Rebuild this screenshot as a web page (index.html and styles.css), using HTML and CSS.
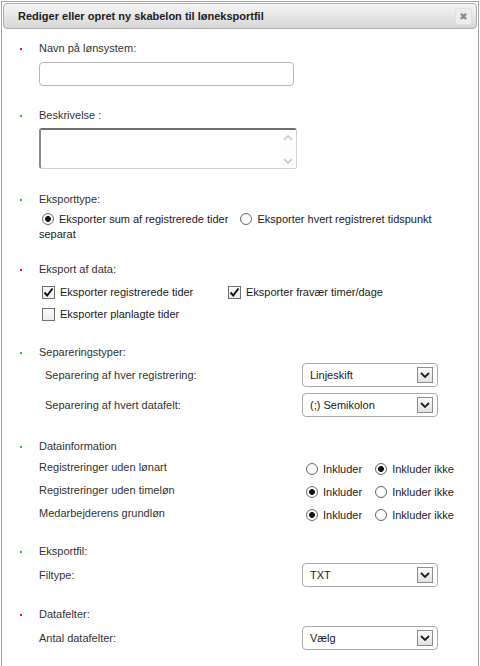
FILE: index.html
```html
<!DOCTYPE html>
<html lang="da">
<head>
<meta charset="utf-8">
<title>Rediger eller opret ny skabelon til løneksportfil</title>
<link rel="stylesheet" href="styles.css">
</head>
<body>
<div class="dialog">
  <div class="titlebar">
    <span class="title">Rediger eller opret ny skabelon til løneksportfil</span>
    <span class="close">&#10006;</span>
  </div>
  <div class="content">
    <div class="sec s1">
      <div class="sec-title req">Navn på lønsystem:</div>
      <div class="textbox"></div>
    </div>

    <div class="sec s2">
      <div class="sec-title opt">Beskrivelse :</div>
      <div class="textarea">
        <div class="scroll">
          <svg width="10" height="6" viewBox="0 0 10 6"><path d="M1 5 L5 1 L9 5" fill="none" stroke="#c4c4c4" stroke-width="1.5"/></svg>
          <svg width="10" height="6" viewBox="0 0 10 6"><path d="M1 1 L5 5 L9 1" fill="none" stroke="#c4c4c4" stroke-width="1.5"/></svg>
        </div>
      </div>
    </div>

    <div class="sec s3">
      <div class="sec-title opt">Eksporttype:</div>
      <div class="radio-para"><span class="rb on"></span><span>Eksporter sum af registrerede tider</span> <span class="rb rb-second"></span><span>Eksporter hvert registreret tidspunkt</span><br><span>separat</span></div>
    </div>

    <div class="sec s4">
      <div class="sec-title req">Eksport af data:</div>
      <div class="check-grid">
        <div class="check"><span class="cb"><svg width="11" height="11" viewBox="0 0 11 11"><path d="M1.5 5.5 L4.2 8.5 L9.5 1.5" fill="none" stroke="#111" stroke-width="2"/></svg></span>Eksporter registrerede tider</div>
        <div class="check"><span class="cb"><svg width="11" height="11" viewBox="0 0 11 11"><path d="M1.5 5.5 L4.2 8.5 L9.5 1.5" fill="none" stroke="#111" stroke-width="2"/></svg></span>Eksporter fravær timer/dage</div>
        <div class="check"><span class="cb"></span>Eksporter planlagte tider</div>
      </div>
    </div>

    <div class="sec s5">
      <div class="sec-title opt">Separeringstyper:</div>
      <div class="field-row sub first">
        <span class="flabel">Separering af hver registrering:</span>
        <div class="select"><span>Linjeskift</span><span class="arrow"><svg width="10" height="6" viewBox="0 0 10 6"><path d="M1 1 L5 5 L9 1" fill="none" stroke="#222" stroke-width="1.8"/></svg></span></div>
      </div>
      <div class="field-row sub">
        <span class="flabel">Separering af hvert datafelt:</span>
        <div class="select"><span>(;) Semikolon</span><span class="arrow"><svg width="10" height="6" viewBox="0 0 10 6"><path d="M1 1 L5 5 L9 1" fill="none" stroke="#222" stroke-width="1.8"/></svg></span></div>
      </div>
    </div>

    <div class="sec s6">
      <div class="sec-title opt">Datainformation</div>
      <div class="info-rows">
        <div class="info-row">
          <span class="ilabel">Registreringer uden lønart</span>
          <span class="iopts"><span class="rb"></span>Inkluder<span class="rb rb-ikke on"></span>Inkluder ikke</span>
        </div>
        <div class="info-row">
          <span class="ilabel">Registreringer uden timeløn</span>
          <span class="iopts"><span class="rb on"></span>Inkluder<span class="rb rb-ikke"></span>Inkluder ikke</span>
        </div>
        <div class="info-row">
          <span class="ilabel">Medarbejderens grundløn</span>
          <span class="iopts"><span class="rb on"></span>Inkluder<span class="rb rb-ikke"></span>Inkluder ikke</span>
        </div>
      </div>
    </div>

    <div class="sec s7">
      <div class="sec-title opt">Eksportfil:</div>
      <div class="field-row first">
        <span class="flabel">Filtype:</span>
        <div class="select"><span>TXT</span><span class="arrow"><svg width="10" height="6" viewBox="0 0 10 6"><path d="M1 1 L5 5 L9 1" fill="none" stroke="#222" stroke-width="1.8"/></svg></span></div>
      </div>
    </div>

    <div class="sec s8">
      <div class="sec-title req">Datafelter:</div>
      <div class="field-row first">
        <span class="flabel">Antal datafelter:</span>
        <div class="select"><span>Vælg</span><span class="arrow"><svg width="10" height="6" viewBox="0 0 10 6"><path d="M1 1 L5 5 L9 1" fill="none" stroke="#222" stroke-width="1.8"/></svg></span></div>
      </div>
    </div>
  </div>
</div>
</body>
</html>
```

FILE: styles.css
```css
html, body {
  margin: 0;
  padding: 0;
  background: #fff;
}

body {
  font-family: "Liberation Sans", Arial, sans-serif;
  font-size: 11px;
  color: #333;
  overflow: hidden;
}

.dialog {
  margin: 1px 1px 0 1px;
  border: 1px solid #a4a4a4;
  border-bottom: none;
  padding: 1px;
  min-height: 700px;
  background: #fff;
}

.titlebar {
  height: 24px;
  border: 1px solid #adadad;
  border-radius: 4px;
  background: linear-gradient(#f6f6f6, #d6d6d6);
  display: flex;
  align-items: center;
  justify-content: space-between;
  padding: 0 4px 0 14px;
}

.title {
  font-weight: bold;
  font-size: 11px;
  color: #222;
}

.close {
  width: 17px;
  height: 17px;
  box-sizing: border-box;
  background: #ededed;
  border: 1px solid #e0e0e0;
  border-radius: 2px;
  color: #8a8a8a;
  font-size: 10px;
  line-height: 15px;
  text-align: center;
  font-family: "DejaVu Sans", sans-serif;
}

.content {
  padding-left: 36px;
}

.sec-title {
  line-height: 16px;
  height: 16px;
  color: #333;
}

.sec-title::before {
  content: "";
  display: inline-block;
  width: 2px;
  height: 2px;
  margin-left: -19px;
  margin-right: 17px;
  vertical-align: 2px;
}

.sec-title.req::before { background: #ff1010; }
.sec-title.opt::before { background: #20cc20; }

.s1 { margin-top: 11px; }
.s2 { margin-top: 21px; }
.s3 { margin-top: 22px; }
.s4 { margin-top: 19px; }
.s5 { margin-top: 19px; }
.s6 { margin-top: 21px; }
.s7 { margin-top: 17px; }
.s8 { margin-top: 19px; }

.textbox {
  margin-top: 6px;
  width: 255px;
  height: 24px;
  box-sizing: border-box;
  border: 1px solid #b8b8b8;
  border-radius: 4px;
  background: #fff;
}

.textarea {
  margin-top: 5px;
  width: 258px;
  height: 41px;
  box-sizing: border-box;
  border: 1px solid #d0d0d0;
  border-top: 2px solid #6f6f6f;
  border-left: 2px solid #8a8a8a;
  border-radius: 3px;
  display: flex;
  justify-content: flex-end;
}

.scroll {
  width: 16px;
  display: flex;
  flex-direction: column;
  justify-content: space-between;
  align-items: center;
  padding: 5px 0 4px;
  background: #fdfdfd;
}

.scroll svg { display: block; }

.radio-para {
  margin-top: 5px;
  line-height: 15px;
  max-width: 400px;
  color: #222;
}

.rb {
  display: inline-block;
  width: 12px;
  height: 12px;
  box-sizing: border-box;
  border: 1px solid #6a6a6a;
  border-radius: 50%;
  background: radial-gradient(circle, #ffffff 40%, #ececec 100%);
  vertical-align: -2px;
  margin: 0 5px 0 3px;
}

.rb.on {
  background: radial-gradient(circle, #111 0, #111 2.6px, #fff 3.2px, #f0f0f0 100%);
}

.rb-second { margin-left: 9px; }

.check-grid {
  margin-top: 4px;
  display: grid;
  grid-template-columns: 186px auto;
  grid-auto-rows: 22px;
  align-items: center;
  color: #222;
}

.check {
  display: flex;
  align-items: center;
}

.cb {
  width: 13px;
  height: 13px;
  box-sizing: border-box;
  border: 1px solid #707070;
  background: linear-gradient(#fafafa, #eeeeee);
  margin: 0 5px 0 3px;
  display: flex;
  align-items: center;
  justify-content: center;
}

.cb svg { display: block; }

.field-row {
  width: 399px;
  height: 24px;
  display: flex;
  align-items: center;
  justify-content: space-between;
  margin-top: 6px;
  color: #333;
}

.field-row.first { margin-top: 4px; }

.field-row.sub .flabel { padding-left: 6px; }

.s5 .field-row.first { margin-top: 3px; }

.select {
  width: 136px;
  height: 24px;
  box-sizing: border-box;
  border: 1px solid #a9a9a9;
  border-radius: 4px;
  background: #fff;
  display: flex;
  align-items: center;
  justify-content: space-between;
  padding: 0 4px 0 7px;
  color: #222;
}

.arrow {
  width: 16px;
  height: 16px;
  box-sizing: border-box;
  border: 1px solid #8c8c8c;
  background: linear-gradient(#fbfbfb, #e2e2e2);
  display: flex;
  align-items: center;
  justify-content: center;
}

.arrow svg { display: block; }

.info-rows {
  margin-top: 3px;
}

.info-row {
  display: grid;
  grid-template-columns: 267px auto;
  height: 23px;
  align-items: center;
}

.ilabel {
  position: relative;
  top: -2px;
  color: #333;
}

.iopts {
  color: #222;
  white-space: nowrap;
}

.iopts .rb { margin-left: 0; }
.iopts .rb.rb-ikke { margin-left: 13px; }
```
